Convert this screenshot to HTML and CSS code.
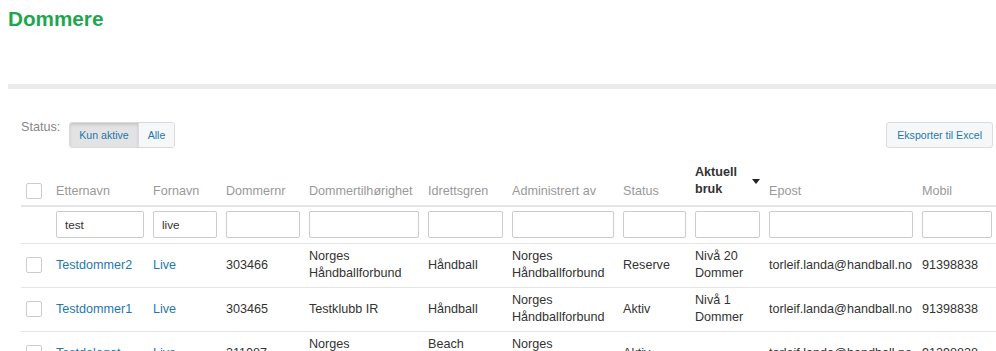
FILE: index.html
```html
<!DOCTYPE html>
<html>
<head>
    <title>Dommere</title>
    <link rel="stylesheet" href="styles.css">
</head>
<body>
    <div class="page">
        <h1 class="page-title">Dommere</h1>
        <div class="divider"></div>

        <div class="content">
            <div class="toolbar">
                <div class="status-filter">
                    <span class="status-label">Status:</span>
                    <div class="btn-group">
                        <button class="btn active">Kun aktive</button>
                        <button class="btn">Alle</button>
                    </div>
                </div>
                <button class="btn export">Eksporter til Excel</button>
            </div>

            <table class="grid">
                <colgroup>
                    <col style="width: 30.5px">
                    <col style="width: 97px">
                    <col style="width: 73px">
                    <col style="width: 83px">
                    <col style="width: 119px">
                    <col style="width: 84px">
                    <col style="width: 111px">
                    <col style="width: 72px">
                    <col style="width: 74px">
                    <col style="width: 153px">
                    <col style="width: 78.5px">
                </colgroup>
                <thead>
                    <tr class="head-row">
                        <th><input type="checkbox" class="check"></th>
                        <th>Etternavn</th>
                        <th>Fornavn</th>
                        <th>Dommernr</th>
                        <th>Dommertilhørighet</th>
                        <th>Idrettsgren</th>
                        <th>Administrert av</th>
                        <th>Status</th>
                        <th class="sorted">
                            <div class="sort-head">
                                <span>Aktuell bruk</span>
                                <span class="caret"></span>
                            </div>
                        </th>
                        <th>Epost</th>
                        <th>Mobil</th>
                    </tr>
                    <tr class="filter-row">
                        <td></td>
                        <td><input type="text" class="filter" value="test"></td>
                        <td><input type="text" class="filter" value="live"></td>
                        <td><input type="text" class="filter"></td>
                        <td><input type="text" class="filter"></td>
                        <td><input type="text" class="filter"></td>
                        <td><input type="text" class="filter"></td>
                        <td><input type="text" class="filter"></td>
                        <td><input type="text" class="filter"></td>
                        <td><input type="text" class="filter"></td>
                        <td><input type="text" class="filter"></td>
                    </tr>
                </thead>
                <tbody>
                    <tr>
                        <td><input type="checkbox" class="check"></td>
                        <td><a href="#">Testdommer2</a></td>
                        <td><a href="#">Live</a></td>
                        <td>303466</td>
                        <td>Norges Håndballforbund</td>
                        <td>Håndball</td>
                        <td>Norges Håndballforbund</td>
                        <td>Reserve</td>
                        <td>Nivå 20 Dommer</td>
                        <td>torleif.landa@handball.no</td>
                        <td>91398838</td>
                    </tr>
                    <tr>
                        <td><input type="checkbox" class="check"></td>
                        <td><a href="#">Testdommer1</a></td>
                        <td><a href="#">Live</a></td>
                        <td>303465</td>
                        <td>Testklubb IR</td>
                        <td>Håndball</td>
                        <td>Norges Håndballforbund</td>
                        <td>Aktiv</td>
                        <td>Nivå 1 Dommer</td>
                        <td>torleif.landa@handball.no</td>
                        <td>91398838</td>
                    </tr>
                    <tr>
                        <td><input type="checkbox" class="check"></td>
                        <td><a href="#">Testdelegat</a></td>
                        <td><a href="#">Live</a></td>
                        <td>311087</td>
                        <td>Norges Håndballforbund</td>
                        <td>Beach Håndball</td>
                        <td>Norges Håndballforbund</td>
                        <td>Aktiv</td>
                        <td></td>
                        <td>torleif.landa@handball.no</td>
                        <td>91398838</td>
                    </tr>
                </tbody>
            </table>
        </div>
    </div>
</body>
</html>
```

FILE: styles.css
```css
html, body {
    margin: 0;
    overflow: hidden;
}
body {
    font-family: "Liberation Sans", Arial, sans-serif;
    font-size: 12.6px;
    line-height: 17px;
    color: #333;
    background: #fff;
}
.page {
    padding-left: 8px;
}
.page-title {
    margin: 7px 0 0;
    font-size: 20.7px;
    line-height: 23px;
    font-weight: bold;
    color: #1fa64f;
}
.divider {
    margin-top: 54px;
    height: 5px;
    background: #ebebeb;
}
.content {
    padding-left: 13px;
}
.toolbar {
    display: flex;
    justify-content: space-between;
    align-items: flex-start;
    margin-top: 33px;
    padding-right: 3px;
}
.status-filter {
    display: flex;
    align-items: flex-start;
}
.status-label {
    color: #888;
    margin-top: -3px;
    margin-right: 9px;
}
.btn-group {
    display: flex;
    border: 1px solid #d9d9d9;
    border-radius: 3px;
    overflow: hidden;
}
.btn {
    font-family: "Liberation Sans", Arial, sans-serif;
    font-size: 10.6px;
    line-height: 24px;
    height: 26px;
    padding: 0 10px;
    color: #1f77b0;
    background: #f5f7f9;
    border: none;
    cursor: pointer;
}
.btn-group .btn {
    height: 24px;
    padding: 0 9px;
}
.btn-group .btn + .btn {
    border-left: 1px solid #dcdcdc;
}
.btn.active {
    background: #e3e3e3;
    box-shadow: inset 0 2px 3px rgba(0, 0, 0, 0.12);
}
.btn.export {
    border: 1px solid #dcdcdc;
    border-radius: 3px;
}
.grid {
    margin-top: 11px;
    width: 975px;
    table-layout: fixed;
    border-collapse: collapse;
}
.grid th,
.grid td {
    padding: 4.5px;
    text-align: left;
    vertical-align: middle;
}
.grid th {
    font-weight: normal;
    color: #999;
    vertical-align: bottom;
    border-bottom: 2px solid #e5e5e5;
}
.grid th.sorted {
    font-weight: bold;
    color: #333;
    padding-bottom: 7px;
}
.sort-head {
    display: flex;
    justify-content: space-between;
    align-items: center;
}
.caret {
    width: 0;
    height: 0;
    margin-top: 2px;
    border-left: 4.5px solid transparent;
    border-right: 4.5px solid transparent;
    border-top: 5px solid #222;
}
.grid tbody td {
    border-top: 1px solid #e5e5e5;
}
.check {
    -webkit-appearance: none;
    appearance: none;
    display: block;
    width: 16px;
    height: 16px;
    margin: 0;
    border: 1px solid #ccc;
    border-radius: 2px;
    background: #fff;
}
.head-row .check {
    margin-bottom: 1.5px;
}
.filter {
    display: block;
    box-sizing: border-box;
    width: 100%;
    height: 27px;
    margin: 0;
    padding: 0 8px;
    font-family: "Liberation Sans", Arial, sans-serif;
    font-size: 11.7px;
    color: #333;
    border: 1px solid #ccc;
    border-radius: 2px;
}
.grid a {
    color: #1f77b0;
    text-decoration: none;
}
```
